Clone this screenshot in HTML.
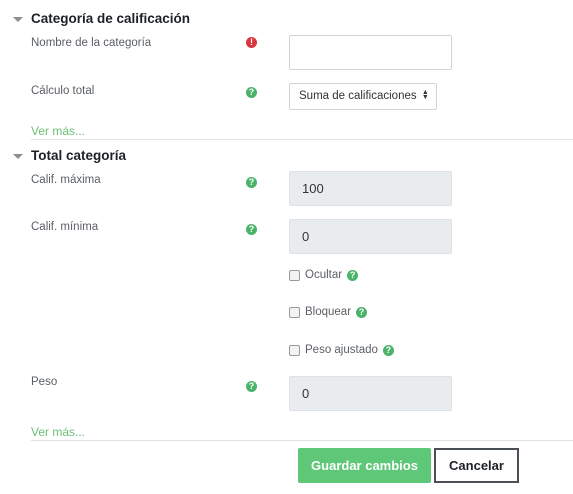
<!DOCTYPE html>
<html><head><meta charset="utf-8"><style>
body{margin:0;width:573px;height:494px;background:#fff;position:relative;font-family:"Liberation Sans",sans-serif;overflow:hidden}
.a{position:absolute}
.h{font-weight:bold;font-size:13.5px;color:#1d2125}
.tri{width:0;height:0;border-left:5px solid transparent;border-right:5px solid transparent;border-top:5px solid #8a8f94}
.l{font-size:11.5px;color:#5a5f64}
.ic{width:11px;height:11px;border-radius:50%;color:#fff;font-size:9px;font-weight:bold;text-align:center;line-height:11px}
.g{background:#4bb26a}
.r{background:#d9363e}
.in{border:1px solid #ced4da;border-radius:2px;box-sizing:border-box}
.gr{background:#e9ecef;border:1px solid #dee2e6;border-radius:2px;box-sizing:border-box;font-size:13px;color:#333;padding-left:12px}
.cb{width:9px;height:9px;border:1px solid #999;border-radius:2px;background:#f3f3f3}
.lk{font-size:12px;color:#6cbf76}
.hr{height:1px;background:#dee2e6;left:31px;right:0}
.ck{display:flex;align-items:center}
.ck .ic{margin-left:5px}
</style></head><body>
<div class="a tri" style="left:13px;top:17px"></div>
<div class="a h" style="left:31px;top:11px">Categoría de calificación</div>
<div class="a l" style="left:31px;top:37px">Nombre de la categoría</div>
<div class="a ic r" style="left:246px;top:37px">!</div>
<div class="a in" style="left:289px;top:35px;width:163px;height:35px"></div>
<div class="a l" style="left:31px;top:85px">Cálculo total</div>
<div class="a ic g" style="left:246px;top:87px">?</div>
<div class="a in" style="left:289px;top:83px;width:148px;height:27px;font-size:11.5px;color:#333;line-height:25px;padding-left:9px">Suma de calificaciones <span style="font-size:7px;position:relative;top:-1px;display:inline-block;line-height:5px;vertical-align:middle;margin-left:2px">▲<br>▼</span></div>
<div class="a lk" style="left:31px;top:124px">Ver más...</div>
<div class="a hr" style="top:139px"></div>
<div class="a tri" style="left:13px;top:154px"></div>
<div class="a h" style="left:31px;top:148px">Total categoría</div>
<div class="a l" style="left:31px;top:174px">Calif. máxima</div>
<div class="a ic g" style="left:246px;top:177px">?</div>
<div class="a gr" style="left:289px;top:171px;width:163px;height:35px;line-height:33px">100</div>
<div class="a l" style="left:31px;top:221px">Calif. mínima</div>
<div class="a ic g" style="left:246px;top:224px">?</div>
<div class="a gr" style="left:289px;top:219px;width:163px;height:35px;line-height:33px">0</div>
<div class="a cb" style="left:289px;top:270px"></div>
<div class="a l ck" style="left:305px;top:269px">Ocultar<span class="ic g">?</span></div>
<div class="a cb" style="left:289px;top:307px"></div>
<div class="a l ck" style="left:305px;top:306px">Bloquear<span class="ic g">?</span></div>
<div class="a cb" style="left:289px;top:345px"></div>
<div class="a l ck" style="left:305px;top:344px">Peso ajustado<span class="ic g">?</span></div>
<div class="a l" style="left:31px;top:376px">Peso</div>
<div class="a ic g" style="left:246px;top:381px">?</div>
<div class="a gr" style="left:289px;top:376px;width:163px;height:35px;line-height:33px">0</div>
<div class="a lk" style="left:31px;top:425px">Ver más...</div>
<div class="a hr" style="top:440px"></div>
<div class="a" style="left:298px;top:448px;width:133px;height:35px;background:#5fc878;color:#fff;font-weight:bold;font-size:13px;text-align:center;line-height:35px;border-radius:2px">Guardar cambios</div>
<div class="a" style="left:434px;top:448px;width:85px;height:35px;box-sizing:border-box;border:2px solid #4a5056;color:#1d2125;font-weight:bold;font-size:13px;text-align:center;line-height:31px">Cancelar</div>
</body></html>
